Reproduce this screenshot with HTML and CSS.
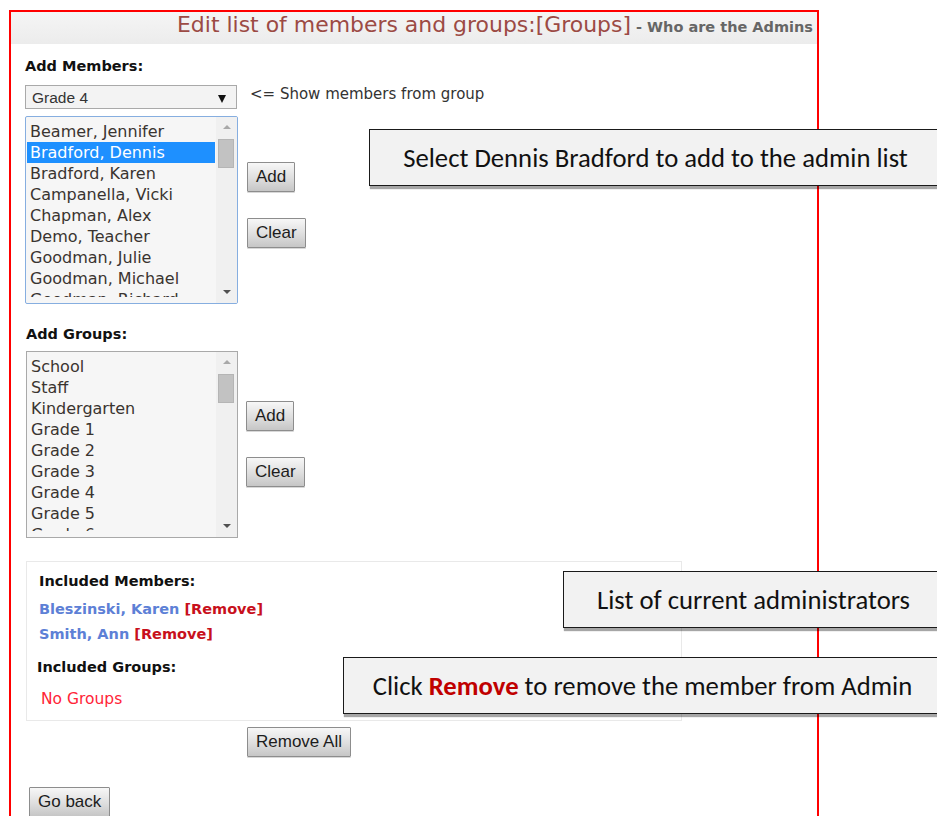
FILE: index.html
```html
<!DOCTYPE html>
<html lang="en">
<head>
<meta charset="utf-8">
<title>Edit list of members and groups</title>
<link rel="stylesheet" href="styles.css">
</head>
<body>
<div class="panel">
  <div class="panel-head">
    <span class="panel-title">Edit list of members and groups:[Groups]</span><span class="panel-sub"> - Who are the Admins</span>
  </div>
  <div class="panel-body">
    <div class="label label-members">Add Members:</div>
    <div class="group-pick">
      <div class="dropdown"><span>Grade 4</span><span class="caret"></span></div>
      <span class="hint">&lt;= Show members from group</span>
    </div>

    <div class="picker picker-members">
      <div class="listbox focused">
        <ul class="options">
          <li>Beamer, Jennifer</li>
          <li class="selected">Bradford, Dennis</li>
          <li>Bradford, Karen</li>
          <li>Campanella, Vicki</li>
          <li>Chapman, Alex</li>
          <li>Demo, Teacher</li>
          <li>Goodman, Julie</li>
          <li>Goodman, Michael</li>
          <li>Goodman, Richard</li>
        </ul>
        <div class="scrollbar">
          <span class="arrow up"></span>
          <span class="thumb"></span>
          <span class="arrow down"></span>
        </div>
      </div>
      <div class="actions">
        <button class="btn">Add</button>
        <button class="btn">Clear</button>
      </div>
    </div>

    <div class="label label-groups">Add Groups:</div>
    <div class="picker picker-groups">
      <div class="listbox">
        <ul class="options">
          <li>School</li>
          <li>Staff</li>
          <li>Kindergarten</li>
          <li>Grade 1</li>
          <li>Grade 2</li>
          <li>Grade 3</li>
          <li>Grade 4</li>
          <li>Grade 5</li>
          <li>Grade 6</li>
        </ul>
        <div class="scrollbar">
          <span class="arrow up"></span>
          <span class="thumb"></span>
          <span class="arrow down"></span>
        </div>
      </div>
      <div class="actions">
        <button class="btn">Add</button>
        <button class="btn">Clear</button>
      </div>
    </div>

    <div class="included">
      <div class="inc-head">Included Members:</div>
      <ul class="inc-members">
        <li><span class="member">Bleszinski, Karen</span> <span class="remove">[Remove]</span></li>
        <li><span class="member">Smith, Ann</span> <span class="remove">[Remove]</span></li>
      </ul>
      <div class="inc-head inc-groups">Included Groups:</div>
      <div class="empty">No Groups</div>
    </div>

    <div class="remove-all-row"><button class="btn">Remove All</button></div>
    <div class="back-row"><button class="btn">Go back</button></div>
  </div>
</div>

<div class="callout callout-select"><span>Select Dennis Bradford to add to the admin list</span></div>
<div class="callout callout-list"><span>List of current administrators</span></div>
<div class="callout callout-remove"><span>Click <b>Remove</b> to remove the member from Admin</span></div>
</body>
</html>
```

FILE: styles.css
```css
html, body {
  margin: 0;
  padding: 0;
  background: #fff;
  height: 816px;
  overflow: hidden;
}

body {
  font-family: "DejaVu Sans", Verdana, sans-serif;
  color: #333;
}

.panel {
  margin: 10px 0 0 9px;
  width: 806px;
  min-height: 900px;
  border: 2px solid #f00;
  border-bottom: none;
}

.panel-head {
  height: 32px;
  line-height: 26px;
  text-align: right;
  padding-right: 4px;
  background: linear-gradient(#f5f5f5, #ececec);
  white-space: nowrap;
}

.panel-title {
  font-size: 21.95px;
  color: #9c4a44;
}

.panel-sub {
  font-size: 14.5px;
  font-weight: bold;
  color: #666;
}

.panel-body {
  padding-left: 14px;
}

.label {
  font-size: 14.5px;
  font-weight: bold;
  line-height: 18px;
  color: #111;
}

.label-members {
  margin-top: 13px;
}

.group-pick {
  margin-top: 10px;
  display: flex;
  align-items: center;
  gap: 13px;
}

.dropdown {
  box-sizing: border-box;
  width: 212px;
  height: 24px;
  border: 1px solid #a9a9a9;
  background: #f3f3f3;
  display: flex;
  align-items: center;
  justify-content: space-between;
  padding: 1px 10px 0 6px;
  font-family: "Liberation Sans", Arial, sans-serif;
  font-size: 15.5px;
  color: #333;
}

.caret {
  width: 0;
  height: 0;
  border-left: 4px solid transparent;
  border-right: 4px solid transparent;
  border-top: 8px solid #111;
  margin-top: 2px;
}

.hint {
  font-size: 15px;
  color: #333;
  margin-top: -7px;
}

.picker {
  display: flex;
  align-items: flex-start;
  gap: 9px;
}

.picker-members {
  margin-top: 7px;
}

.picker-members .actions {
  padding-top: 46px;
}

.label-groups {
  margin-top: 21px;
  margin-left: 1px;
}

.picker-groups {
  margin-top: 8px;
  margin-left: 1px;
}

.picker-groups .listbox {
  width: 212px;
  height: 187px;
}

.picker-groups .actions {
  padding-top: 50px;
  margin-left: -1px;
}

.listbox {
  box-sizing: border-box;
  width: 213px;
  height: 188px;
  border: 1px solid #a9a9a9;
  background: #f6f6f6;
  display: flex;
  overflow: hidden;
  position: relative;
}

.listbox.focused {
  border-color: #86aee0;
  border-radius: 2px;
}

.options {
  list-style: none;
  margin: 4px 0 6px 1px;
  padding: 0;
  flex: 1;
  overflow: hidden;
  font-size: 16px;
  color: #3a3430;
}

.options li {
  height: 21px;
  line-height: 21px;
  padding-left: 3px;
  white-space: nowrap;
  margin-right: 1px;
}

.options li.selected {
  background: #1e90ff;
  color: #fff;
}

.scrollbar {
  width: 20px;
  background: #f0f0f0;
  position: relative;
  border-left: 1px solid #f0f0f0;
}

.scrollbar .thumb {
  position: absolute;
  left: 1px;
  top: 22px;
  width: 16px;
  height: 29px;
  background: #c2c2c2;
  border: 1px solid #b5b5b5;
  box-sizing: border-box;
}

.scrollbar .arrow {
  position: absolute;
  left: 6px;
  width: 0;
  height: 0;
  border-left: 4px solid transparent;
  border-right: 4px solid transparent;
}

.scrollbar .arrow.up {
  top: 8px;
  border-bottom: 4px solid #a8a8a8;
}

.scrollbar .arrow.down {
  bottom: 9px;
  border-top: 4px solid #505050;
}

.actions {
  display: flex;
  flex-direction: column;
  align-items: flex-start;
  gap: 26px;
}

.btn {
  box-sizing: border-box;
  height: 30px;
  padding: 0 8px;
  border: 1px solid #8d8d8d;
  border-radius: 1px;
  background: linear-gradient(#f7f7f7, #dedede 55%, #c6c6c6);
  font-family: "Liberation Sans", Arial, sans-serif;
  font-size: 17px;
  color: #1c1c1c;
  box-shadow: 0 1px 0 #d8d8d8;
}

.included {
  box-sizing: border-box;
  margin-top: 23px;
  margin-left: 1px;
  width: 656px;
  height: 160px;
  border: 1px solid #e9e9e9;
  padding: 10px 0 0 12px;
}

.inc-head {
  font-size: 14.5px;
  font-weight: bold;
  line-height: 18px;
  color: #111;
}

.inc-members {
  list-style: none;
  margin: 7px 0 0;
  padding: 0;
  font-size: 14.5px;
  font-weight: bold;
  line-height: 25px;
}

.member {
  color: #5d80d6;
}

.remove {
  color: #c8101c;
}

.inc-groups {
  margin-top: 11px;
  margin-left: -2px;
}

.empty {
  margin-top: 14px;
  margin-left: 2px;
  font-size: 15.5px;
  line-height: 18px;
  color: #ff2438;
}

.remove-all-row {
  margin-top: 6px;
  padding-left: 222px;
}

.back-row {
  margin-top: 30px;
  padding-left: 4px;
}

/* instructional callouts laid over the form */
.callout {
  position: absolute;
  box-sizing: border-box;
  height: 57px;
  background: #f2f2f2;
  border: 1.5px solid #1a1a1a;
  box-shadow: 1px 3px 1px rgba(0, 0, 0, 0.35);
  font-family: "Carlito", "Open Sans", sans-serif;
  font-size: 26.7px;
  color: #111;
  display: flex;
  align-items: center;
  justify-content: center;
  white-space: nowrap;
}

.callout b {
  color: #c00000;
}

.callout-select {
  left: 369px;
  top: 129px;
  width: 573px;
}

.callout-list {
  left: 563px;
  top: 571px;
  width: 381px;
}

.callout-remove {
  left: 343px;
  top: 657px;
  width: 599px;
}
```
